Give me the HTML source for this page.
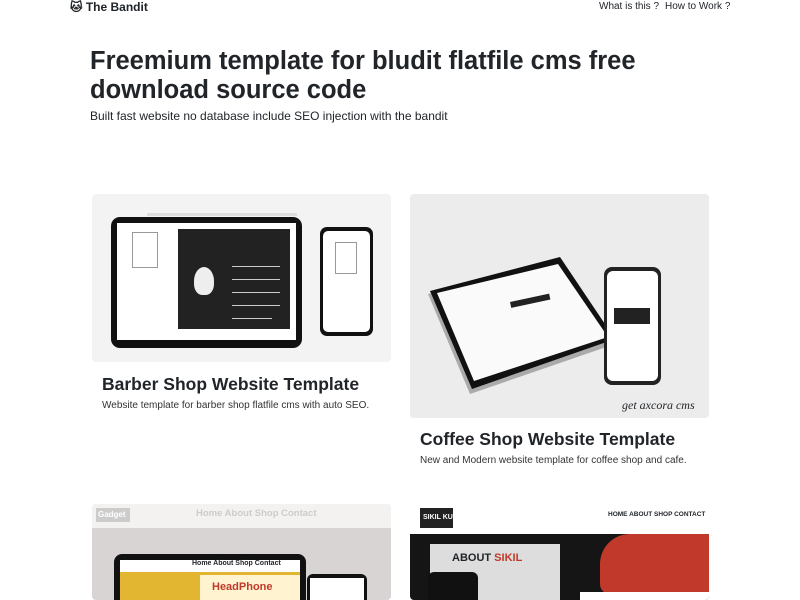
<!DOCTYPE html>
<html><head><meta charset="utf-8"><style>
*{margin:0;padding:0;box-sizing:border-box}
body{width:800px;height:600px;overflow:hidden;background:#fff;font-family:"Liberation Sans",sans-serif;color:#212529;position:relative}
.a{position:absolute;white-space:nowrap}
.brand{left:70px;top:0;font-weight:bold;font-size:12px;line-height:14px}
.nav{top:1px;font-size:10px;line-height:12px}
h1{position:absolute;left:90px;top:47px;font-size:25.5px;line-height:29px;font-weight:bold;white-space:nowrap}
.sub{left:90px;top:109px;font-size:12px}
.card{position:absolute;border-radius:4px;overflow:hidden}
.ct{font-size:17.5px;font-weight:bold}
.cd{font-size:10px;color:#333}
.ln{position:absolute;height:1px;background:#ccc}
</style></head><body>
<div class="a brand">&#x1F431;&#xFE0E; The Bandit</div>
<div class="a nav" style="left:599px">What is this ?</div>
<div class="a nav" style="left:665px">How to Work ?</div>
<h1>Freemium template for bludit flatfile cms free<br>download source code</h1>
<div class="a sub">Built fast website no database include SEO injection with the bandit</div>

<div class="card" style="left:92px;top:194px;width:299px;height:168px;background:#f3f3f3">
 <div class="a" style="left:55px;top:19px;width:150px;height:3px;background:#ddd"></div>
 <div class="a" style="left:19px;top:23px;width:191px;height:131px;background:#111;border-radius:9px"></div>
 <div class="a" style="left:25px;top:29px;width:179px;height:117px;background:#fff"></div>
 <div class="a" style="left:86px;top:35px;width:112px;height:100px;background:#222"></div>
 <div class="ln" style="left:140px;top:72px;width:48px"></div>
 <div class="ln" style="left:140px;top:85px;width:48px"></div>
 <div class="ln" style="left:140px;top:98px;width:48px"></div>
 <div class="ln" style="left:140px;top:111px;width:48px"></div>
 <div class="ln" style="left:140px;top:124px;width:40px"></div>
 <div class="a" style="left:102px;top:73px;width:20px;height:28px;background:#eee;border-radius:50% 50% 40% 40%"></div>
 <div class="a" style="left:40px;top:38px;width:26px;height:36px;border:1px solid #999"></div>
 <div class="a" style="left:228px;top:33px;width:53px;height:109px;background:#111;border-radius:7px"></div>
 <div class="a" style="left:231px;top:37px;width:47px;height:101px;background:#fff;border-radius:5px"></div>
 <div class="a" style="left:243px;top:48px;width:22px;height:32px;border:1px solid #999"></div>
</div>
<div class="a ct" style="left:102px;top:374px">Barber Shop Website Template</div>
<div class="a cd" style="left:102px;top:400px">Website template for barber shop flatfile cms with auto SEO.</div>

<div class="card" style="left:410px;top:194px;width:299px;height:224px;background:#ececec">
 <svg class="a" style="left:0;top:0" width="299" height="224"><polygon points="18,100 150,68 205,150 60,200" fill="#aaa"/><polygon points="20,97 150,63 205,145 62,195" fill="#111"/><polygon points="27,99 148,70 198,143 64,187" fill="#fafafa"/><rect x="100" y="108" width="40" height="6" fill="#222" transform="rotate(-12 100 108)"/></svg>
 <div class="a" style="left:194px;top:73px;width:57px;height:118px;background:#222;border-radius:8px"></div>
 <div class="a" style="left:197px;top:77px;width:51px;height:110px;background:#fff;border-radius:6px"></div>
 <div class="a" style="left:204px;top:114px;width:36px;height:16px;background:#222"></div>
 <div class="a" style="left:212px;top:204px;font-family:'Liberation Serif',serif;font-style:italic;font-size:12px">get axcora cms</div>
</div>
<div class="a ct" style="left:420px;top:429px">Coffee Shop Website Template</div>
<div class="a cd" style="left:420px;top:455px">New and Modern website template for coffee shop and cafe.</div>

<div class="card" style="left:92px;top:504px;width:299px;height:96px;background:#d8d4d4">
 <div class="a" style="left:0;top:0;width:299px;height:24px;background:#f4f1f1"></div>
 <div class="a" style="left:4px;top:4px;width:34px;height:14px;background:#ccc;color:#fff;font-size:8px;font-weight:bold;padding:2px">Gadget</div>
 <div class="a" style="left:104px;top:4px;font-size:9.5px;color:#ccc;font-weight:bold">Home About Shop Contact</div>
 <div class="a" style="left:22px;top:50px;width:192px;height:46px;background:#111;border-radius:8px 8px 0 0"></div>
 <div class="a" style="left:28px;top:56px;width:180px;height:40px;background:#fff"></div>
 <div class="a" style="left:100px;top:56px;font-size:7px;font-weight:bold">Home About Shop Contact</div>
 <div class="a" style="left:28px;top:68px;width:180px;height:28px;background:#e2b630"></div>
 <div class="a" style="left:108px;top:71px;width:100px;height:25px;background:#fff3d0;color:#c0392b;font-size:11px;font-weight:bold;padding:6px 12px">HeadPhone</div>
 <div class="a" style="left:215px;top:70px;width:60px;height:26px;background:#111;border-radius:6px 6px 0 0"></div>
 <div class="a" style="left:218px;top:74px;width:54px;height:22px;background:#fff"></div>
</div>
<div class="card" style="left:410px;top:504px;width:299px;height:96px;background:#fff">
 <div class="a" style="left:10px;top:4px;width:33px;height:20px;background:#222;color:#fff;font-size:7px;font-weight:bold;padding:6px 3px">SIKIL KU</div>
 <div class="a" style="left:198px;top:7px;font-size:6.5px;font-weight:bold">HOME ABOUT SHOP CONTACT</div>
 <div class="a" style="left:0;top:30px;width:299px;height:66px;background:#151515"></div>
 <div class="a" style="left:20px;top:40px;width:130px;height:56px;background:#ddd"></div>
 <div class="a" style="left:42px;top:48px;font-size:11px;font-weight:bold">ABOUT <span style="color:#c0392b">SIKIL</span></div>
 <div class="a" style="left:190px;top:30px;width:109px;height:60px;background:#c0392b;border-radius:30px 0 0 10px"></div>
 <div class="a" style="left:170px;top:88px;width:129px;height:8px;background:#fff"></div>
 <div class="a" style="left:18px;top:68px;width:50px;height:28px;background:#111;border-radius:6px 6px 0 0"></div>
</div>
</body></html>
